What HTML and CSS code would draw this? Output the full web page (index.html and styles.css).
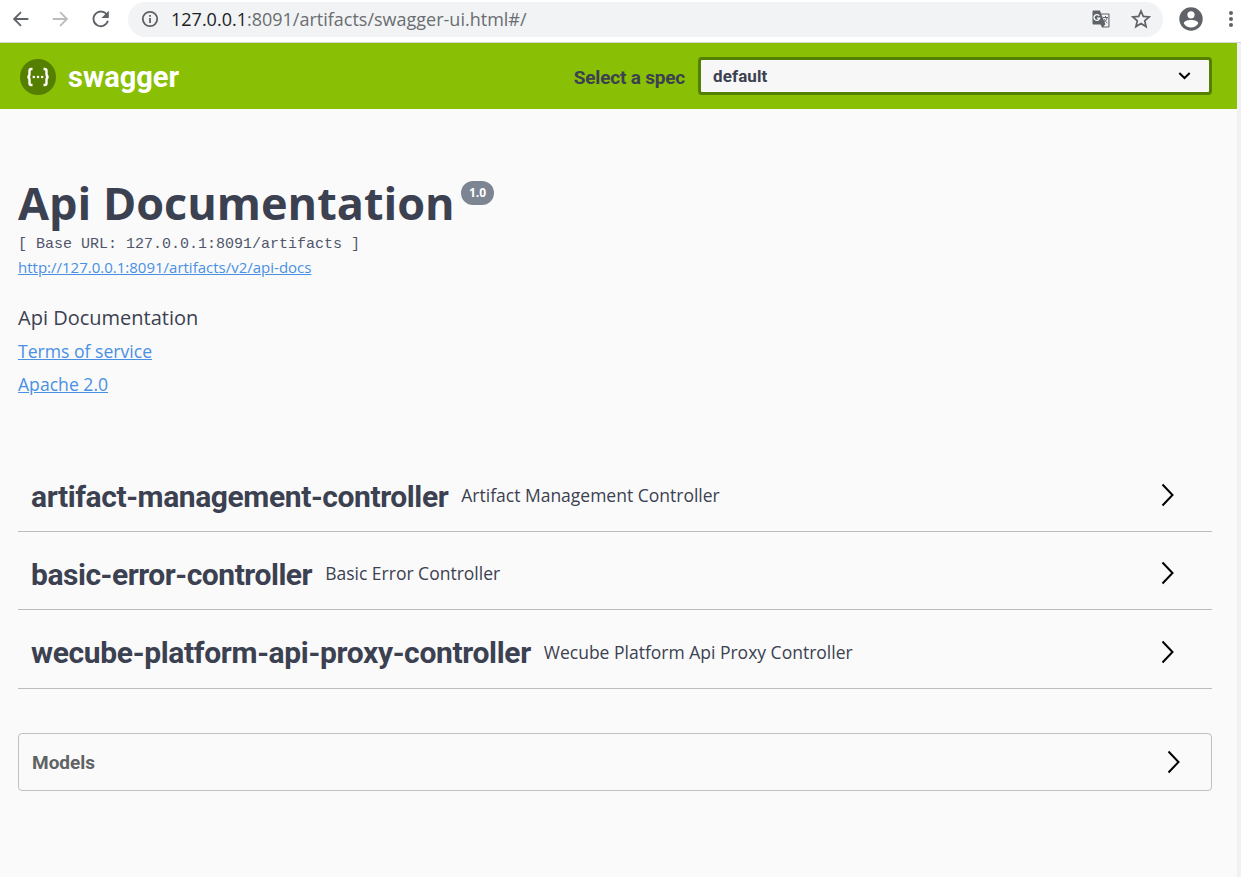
FILE: index.html
```
<!DOCTYPE html>
<html lang="en">
<head>
<meta charset="utf-8">
<title>Swagger UI</title>
<link rel="stylesheet" href="styles.css">
</head>
<body>
<header class="browser">
  <svg class="nav-icon" viewBox="0 0 24 24"><path d="M20 12H5M12 4.500 4.500 12l7.500 7.500"/></svg>
  <svg class="nav-icon disabled" viewBox="0 0 24 24"><path d="M3 12h15M11 4.500 18.500 12 11 19.500"/></svg>
  <svg class="nav-icon" viewBox="0 0 24 24"><path d="M18.500 7.500A8 8 0 1 0 19.500 14"/><path class="solid" d="M20.500 3v8h-8z"/></svg>
  <div class="address">
    <svg class="info" viewBox="0 0 18 18"><circle cx="9" cy="9" r="7.200"/><path d="M9 8v5M9 5v1.800"/></svg>
    <span class="url"><span class="host">127.0.0.1</span>:8091/artifacts/swagger-ui.html#/</span>
    <svg class="translate" viewBox="0 0 20 20"><path class="solid" d="M2.500 1.500H9l1 3h7.500a1 1 0 0 1 1 1v12a1 1 0 0 1-1 1H11l-1.500-3h-7a1 1 0 0 1-1-1v-12a1 1 0 0 1 1-1z"/><path class="paper" d="M10.400 5.500h7v12h-5l2-2.300z"/><path class="g" d="M8.300 6.800a2.900 2.900 0 1 0 .4 2.400H6"/><path class="glyph" d="M12 8.500h5M14.500 7v1.500M16 9c-.5 2-2 3.500-3.500 4.500M13 10c.7 1.500 2 3 3.300 4"/></svg>
    <svg class="star" viewBox="0 0 20 20"><path d="m10 2 2.300 5.400 5.900.5-4.500 3.900 1.400 5.800-5.100-3.100-5.100 3.100 1.400-5.800L1.800 7.900l5.900-.5z"/></svg>
  </div>
  <svg class="avatar" viewBox="0 0 24 24"><circle cx="12" cy="12" r="11.700"/><circle class="cut" cx="12" cy="7.800" r="3.600"/><path class="cut" d="M4.800 16.500C5 13.500 9 12.900 12 12.900s7 .6 7.200 3.600A8.700 8.700 0 0 1 12 20.400a8.700 8.700 0 0 1-7.200-3.900z"/></svg>
  <svg class="dots" viewBox="0 0 6 20"><circle cx="3" cy="4" r="2"/><circle cx="3" cy="10" r="2"/><circle cx="3" cy="16" r="2"/></svg>
</header>
<div class="page">
  <div class="topbar">
    <svg class="logo" viewBox="0 0 36 36"><circle cx="18" cy="18" r="18"/><path d="M12.500 10h-1.200c-1.300 0-1.800.7-1.800 2v3c0 1.800-.6 2.800-2 3 1.400.2 2 1.200 2 3v3c0 1.300.5 2 1.800 2h1.200M23.500 10h1.200c1.300 0 1.800.7 1.800 2v3c0 1.800.6 2.800 2 3-1.400.2-2 1.200-2 3v3c0 1.300-.5 2-1.800 2h-1.200"/><circle class="dot" cx="13.800" cy="18" r="1.300"/><circle class="dot" cx="18" cy="18" r="1.300"/><circle class="dot" cx="22.200" cy="18" r="1.300"/></svg>
    <span class="brand">swagger</span>
    <span class="spec-label">Select a spec</span>
    <div class="select"><span>default</span><svg class="caret" viewBox="0 0 12 8"><path d="m.8 1 5.200 5L11.200 1"/></svg></div>
  </div>
  <main class="content">
    <section class="info-block">
      <h1 class="title">Api Documentation<span class="version">1.0</span></h1>
      <pre class="base">[ Base URL: 127.0.0.1:8091/artifacts ]</pre>
      <a class="docs">http://127.0.0.1:8091/artifacts/v2/api-docs</a>
      <p class="description">Api Documentation</p>
      <a class="link">Terms of service</a>
      <a class="link">Apache 2.0</a>
    </section>
    <section class="tags">
      <div class="tag"><h2 class="tag-name artifact">artifact-management-controller</h2><span class="tag-text">Artifact Management Controller</span><svg class="arrow" viewBox="0 0 14 24"><path d="m1.500 1.500 10 10.500-10 10.500"/></svg></div>
      <div class="tag"><h2 class="tag-name basic">basic-error-controller</h2><span class="tag-text">Basic Error Controller</span><svg class="arrow" viewBox="0 0 14 24"><path d="m1.500 1.500 10 10.500-10 10.500"/></svg></div>
      <div class="tag"><h2 class="tag-name wecube">wecube-platform-api-proxy-controller</h2><span class="tag-text">Wecube Platform Api Proxy Controller</span><svg class="arrow" viewBox="0 0 14 24"><path d="m1.500 1.500 10 10.500-10 10.500"/></svg></div>
    </section>
    <section class="models"><h3 class="models-title">Models</h3><svg class="arrow" viewBox="0 0 14 24"><path d="m1.500 1.500 10 10.500-10 10.500"/></svg></section>
  </main>
</div>
</body>
</html>
```
FILE: styles.css
```
* { box-sizing: border-box; }
body { margin: 0; width: 1241px; height: 877px; overflow: hidden; background: #f1f1f1; color: #3b4151; font-family: "Open Sans", sans-serif; }
h1, h2, h3, p, pre { margin: 0; }
svg { display: block; flex: none; fill: none; }
.browser { display: flex; align-items: center; height: 43px; padding: 0 8px 4px 10px; background: #fff; border-bottom: 1px solid #d5d7d9; }
.nav-icon { width: 22px; height: 22px; margin-right: 18px; stroke: #5f6368; stroke-width: 2; }
.nav-icon.disabled { stroke: #babcbe; }
.nav-icon .solid { fill: #5f6368; stroke: none; }
.address { display: flex; flex: none; align-items: center; width: 1035px; height: 35px; margin-left: -2px; padding: 0 12px 0 13px; border-radius: 18px; background: #f1f3f4; }
.info { width: 18px; height: 18px; stroke: #5f6368; stroke-width: 1.800; }
.url { margin-left: 12px; margin-right: auto; font: 18px/24px "Open Sans", sans-serif; color: #6a6d71; }
.host { color: #202124; }
.translate { width: 20px; height: 20px; margin-right: 20px; }
.translate .solid { fill: #5f6368; }
.translate .paper { fill: #f1f3f4; }
.translate .g { stroke: #fff; stroke-width: 1.300; }
.translate .glyph { stroke: #5f6368; }
.star { width: 20px; height: 20px; stroke: #5f6368; stroke-width: 1.700; }
.avatar { width: 24px; height: 24px; margin-left: 15.500px; fill: #5f6368; }
.cut { fill: #fff; }
.dots { width: 6px; height: 20px; margin-left: 25px; fill: #5f6368; }
.page { width: 1237px; height: 834px; background: #fafafa; }
.topbar { display: flex; align-items: center; height: 66px; padding: 0 25px 0 20px; background: #89bf04; font-family: Roboto, sans-serif; font-weight: 700; }
.logo { width: 36px; height: 36px; fill: #547f00; margin-top: 2px; }
.logo path { fill: none; stroke: #fff; stroke-width: 2.400; }
.logo .dot { fill: #fff; }
.brand { margin: 2px 0 0 12px; color: #fff; font-size: 29px; }
.spec-label { margin: 2px 13px 0 auto; font-size: 19px; letter-spacing: -0.200px; }
.select { display: flex; align-items: center; justify-content: space-between; width: 514px; height: 38px; padding: 0 18px 0 12px; border: 3px solid #547f00; border-radius: 4px; background: #f7f7f7; font-size: 17px; letter-spacing: 0.100px; }
.caret { width: 13px; height: 8px; stroke: #000; stroke-width: 2; }
.content { padding: 66px 25px 0 18px; }
.info-block { height: 278.600px; }
.title { display: flex; align-items: flex-start; font-size: 45px; line-height: 56px; }
.version { margin: 6px 0 0 6.400px; width: 33px; height: 24px; border-radius: 12px; background: #7d8492; color: #fff; font: 700 12px/24px "Open Sans", sans-serif; text-align: center; }
.base { padding-top: 3px; font: 15px/21px "Liberation Mono", monospace; color: #50566a; }
.docs { display: block; font-size: 15px; line-height: 25px; color: #4990e2; text-decoration: underline; }
.description { margin-top: 21px; font-size: 20px; line-height: 34px; }
.link { display: block; font-size: 17.600px; line-height: 33px; color: #4990e2; text-decoration: underline; }
.tag { display: flex; align-items: center; height: 78.400px; padding: 5.500px 37px 0 13px; border-bottom: 1px solid #bbbcbe; }
.tag-name { padding-top: 3px; font: 700 30px/38px Roboto, sans-serif; }
.artifact { letter-spacing: -0.410px; }
.basic { letter-spacing: -0.460px; }
.wecube { letter-spacing: -0.340px; }
.tag-text { margin-left: 13px; font-size: 17.500px; }
.arrow { width: 14px; height: 24px; margin-left: auto; stroke: #000; stroke-width: 2; }
.models { display: flex; align-items: center; height: 58px; margin-top: 44.400px; padding: 0 30px 0 13px; border: 1px solid #bfc0c2; border-radius: 4px; }
.models-title { padding-top: 1px; font: 700 19px/24px Roboto, sans-serif; color: #606364; }
```
